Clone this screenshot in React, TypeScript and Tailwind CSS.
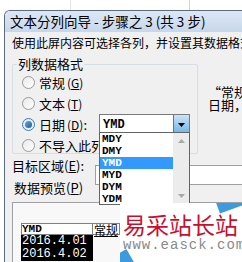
import React from "react"

const cjk = { fontFamily: '"Noto Sans CJK SC", "Noto Sans", sans-serif' }
const mono = { fontFamily: '"Liberation Mono", "DejaVu Sans Mono", monospace' }

function Radio({ label, hot, rest, checked }: { label: string; hot?: string; rest?: string; checked?: boolean }) {
  return (
    <div className="flex h-[21px] items-center gap-[4px] whitespace-nowrap">
      <span
        className={`flex h-[13px] w-[13px] shrink-0 items-center justify-center rounded-full border ${
          checked ? "border-[#3c7fb1] bg-[#e6f0fa]" : "border-[#9a9a9a] bg-gradient-to-br from-[#e9e9e9] to-white"
        }`}
      >
        {checked && <span className="h-[7px] w-[7px] rounded-full bg-gradient-to-br from-[#6aa6d8] to-[#1f5d99]" />}
      </span>
      <span className="text-[13px] leading-none text-black">
        {label}
        {hot && (
          <span className="ml-[2px] text-[12px]">
            (<span className="underline">{hot}</span>)
          </span>
        )}
        {rest}
      </span>
    </div>
  )
}

const options = ["MDY", "DMY", "YMD", "MYD", "DYM", "YDM"]

export default function App() {
  return (
    <div className="relative h-[262px] w-[242px] overflow-hidden bg-white" style={cjk}>
      <div className="absolute left-[189px] top-0 h-[10px] w-px bg-[#d4d4d4]" />
      <div className="absolute left-[70px] top-0 h-[10px] w-px bg-[#e4e4e4]" />

      <div className="pl-[4px] pt-[10px]">
        <div className="w-[400px] overflow-hidden rounded-tl-[6px] border-l border-t border-[#5b6b80]">
          <div className="flex h-[21px] items-center whitespace-nowrap bg-gradient-to-b from-[#dde8f5] to-[#c6d7ec] pl-[5px] text-[13.5px] text-black">
            文本分列向导 - 步骤之 3 (共 3 步)
          </div>
          <div className="h-[260px] bg-[#f0f0f0] pl-[7px]">
            <div className="whitespace-nowrap pt-[4px] text-[12px] leading-[14px] text-black">
              使用此屏内容可选择各列，并设置其数据格式。
            </div>

            <div className="mt-[14px] flex">
              <div className="relative h-[90px] w-[186px] shrink-0 rounded-[2px] border border-[#d5dfe5]">
                <span className="absolute -top-[9px] left-[4px] bg-[#f0f0f0] px-[1px] text-[13px] leading-[16px] text-black">
                  列数据格式
                </span>
                <div className="ml-[9px] mt-[7px] flex flex-col">
                  <Radio label="常规" hot="G" />
                  <Radio label="文本" hot="T" />
                  <div className="flex items-center">
                    <div className="w-[77px] shrink-0">
                      <Radio label="日期" hot="D" checked rest=":" />
                    </div>
                    <div className="flex h-[21px] w-[91px] shrink-0 items-center border border-[#7a7a7a] bg-white">
                      <span className="flex-1 pl-[3px] text-[12px] font-bold leading-none text-black" style={mono}>
                        YMD
                      </span>
                      <span className="flex h-[19px] w-[16px] items-center justify-center border-l border-[#3c7fb1] bg-gradient-to-b from-[#c9e4f8] to-[#6fb1e4]">
                        <svg width="7" height="4" viewBox="0 0 7 4">
                          <path d="M0 0h7L3.5 4z" fill="#000" />
                        </svg>
                      </span>
                    </div>
                  </div>
                  <Radio label="不导入此列" rest="(跳过)(I)" />
                </div>
              </div>
              <div className="ml-[10px] mt-[21px] whitespace-nowrap text-[13px] leading-[13px] text-black">
                <div>“常规”数据格式将数值转换成数字，</div>
                <div>日期，其余数据则转换成文本。</div>
              </div>
            </div>

            <div className="mt-[3px] flex items-start">
              <span className="mt-[2px] whitespace-nowrap text-[13px] leading-none text-black">
                目标区域(<span className="underline">E</span>):
              </span>
              <div className="ml-[11px] mt-[8px] h-[20px] flex-1 border border-[#a0a0a0] bg-white" />
            </div>

            <div className="-mt-[4px] whitespace-nowrap pl-[2px] text-[13px] leading-none text-black">
              数据预览(<span className="underline">P</span>)
            </div>

            <div className="mt-[8px] h-[80px] w-[300px] border-l border-t border-[#a0a0a0] bg-[#f8f8f8] pl-[8px] pt-[20px]">
              <div className="flex">
                <div className="w-[72px]">
                  <div className="h-[12px] border border-[#808080] bg-white text-[11px] font-bold leading-[11px] text-black" style={mono}>
                    YMD
                  </div>
                  <div className="h-[13px] bg-black pl-[1px] text-[12px] leading-[13px] text-white" style={mono}>
                    2016.4.01
                  </div>
                  <div className="h-[13px] bg-black pl-[1px] text-[12px] leading-[13px] text-white" style={mono}>
                    2016.4.02
                  </div>
                </div>
                <div className="h-[12px] border-y border-r border-[#808080] bg-white px-[1px] text-[12px] leading-[11px] text-black underline">
                  常规
                </div>
              </div>
            </div>
          </div>
        </div>
      </div>

      {/* dropdown list */}
      <div className="absolute left-[99px] top-[132px] flex h-[73px] w-[91px] border border-[#646464] bg-white">
        <div className="flex flex-1 flex-col">
          {options.map((o) => (
            <div
              key={o}
              className={`h-[12px] pl-[2px] text-[11px] font-bold leading-[12px] ${o === "YMD" ? "bg-[#3399ff] text-white" : "text-black"}`}
              style={mono}
            >
              {o}
            </div>
          ))}
        </div>
        <div className="flex w-[16px] flex-col items-center justify-between bg-[#ececec] py-[6px]">
          <svg width="7" height="4" viewBox="0 0 7 4">
            <path d="M0 4L3.5 0L7 4z" fill="#a8a8a8" />
          </svg>
          <svg width="7" height="4" viewBox="0 0 7 4">
            <path d="M0 0h7L3.5 4z" fill="#a8a8a8" />
          </svg>
        </div>
      </div>

      {/* watermark */}
      <div className="absolute left-[120px] top-[203px] h-[59px] w-[122px] overflow-hidden bg-white">
        <div className="absolute -right-[4px] -top-[12px] h-[18px] w-[30px] rotate-[-20deg] bg-[#3a9be0]" />
        <div className="absolute -bottom-[8px] -left-[12px] h-[16px] w-[24px] rotate-[-30deg] bg-[#3a9be0]" />
        <div
          className="relative whitespace-nowrap pl-[3px] pt-[8px] text-[23px] leading-[26px] text-[#c8102e]"
          style={{ fontFamily: '"Noto Sans CJK SC", serif' }}
        >
          易采站长站
        </div>
        <div className="relative whitespace-nowrap pl-[3px] text-[14px] leading-[16px] tracking-[1px] text-[#8a8a8a]" style={mono}>
          www.easck.com
        </div>
      </div>
    </div>
  )
}
